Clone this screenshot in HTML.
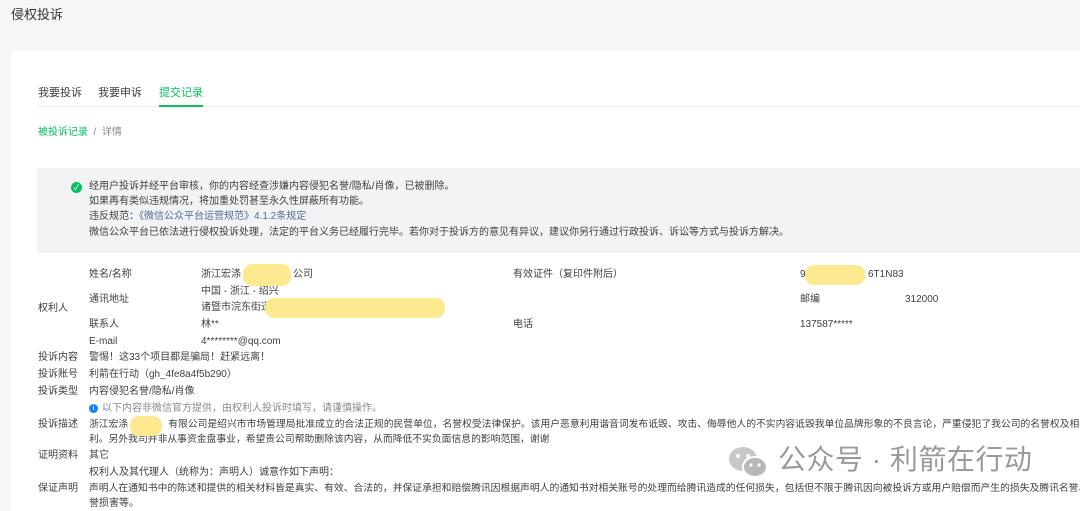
<!DOCTYPE html>
<html><head><meta charset="utf-8"><style>
body{margin:0;width:1080px;height:504px;overflow:hidden;background:#f5f6f7;font-family:"Liberation Sans","Noto Sans CJK SC",sans-serif;color:#404040;position:relative}
.a{position:absolute;white-space:nowrap;font-size:10px;line-height:12px}
.card{position:absolute;left:11px;top:51px;width:1080px;height:460px;background:#fff}
.note{position:absolute;left:37px;top:168px;width:1050px;height:85px;background:#f2f3f5}
.g{color:#8a8a8a}
.blob{position:absolute;background:#fde98f;border-radius:9px}
</style></head><body>
<div class="a" style="left:11px;top:7px;font-size:13px;line-height:16px;color:#333">侵权投诉</div>
<div class="card"></div>
<div class="a" style="left:38px;top:86px;font-size:11px;line-height:14px">我要投诉</div>
<div class="a" style="left:98px;top:86px;font-size:11px;line-height:14px">我要申诉</div>
<div class="a" style="left:159px;top:86px;font-size:11px;line-height:14px;color:#07c160">提交记录</div>
<div style="position:absolute;left:38px;top:106px;width:1042px;height:1px;background:#ececec"></div>
<div style="position:absolute;left:159px;top:105px;width:44px;height:2px;background:#07c160"></div>
<div class="a" style="left:38px;top:127px;color:#07c160">被投诉记录 <span class="g">&nbsp;/&nbsp; 详情</span></div>
<div class="note"></div>
<div style="position:absolute;left:71px;top:182px;width:11px;height:11px;border-radius:50%;background:#07c160;color:#fff;font-size:8px;line-height:11px;text-align:center">✓</div>
<div class="a" style="left:89px;top:181px">经用户投诉并经平台审核，你的内容经查涉嫌内容侵犯名誉/隐私/肖像，已被删除。</div>
<div class="a" style="left:89px;top:196px">如果再有类似违规情况，将加重处罚甚至永久性屏蔽所有功能。</div>
<div class="a" style="left:89px;top:211px">违反规范：<span style="color:#576b95">《微信公众平台运营规范》4.1.2条规定</span></div>
<div class="a" style="left:89px;top:227px">微信公众平台已依法进行侵权投诉处理，法定的平台义务已经履行完毕。若你对于投诉方的意见有异议，建议你另行通过行政投诉、诉讼等方式与投诉方解决。</div>
<div class="a" style="left:89px;top:269px">姓名/名称</div>
<div class="a" style="left:201px;top:269px">浙江宏涤</div>
<div class="a" style="left:293px;top:269px">公司</div>
<div class="a" style="left:513px;top:269px">有效证件（复印件附后）</div>
<div class="a" style="left:800px;top:269px">91</div>
<div class="a" style="left:868px;top:269px">6T1N83</div>
<div class="a" style="left:89px;top:294px">通讯地址</div>
<div class="a" style="left:201px;top:286px">中国 - 浙江 - 绍兴</div>
<div class="a" style="left:201px;top:302px">诸暨市浣东街道</div>
<div class="a" style="left:800px;top:294px">邮编</div>
<div class="a" style="left:905px;top:294px">312000</div>
<div class="a" style="left:38px;top:303px">权利人</div>
<div class="a" style="left:89px;top:319px">联系人</div>
<div class="a" style="left:201px;top:319px">林**</div>
<div class="a" style="left:513px;top:319px">电话</div>
<div class="a" style="left:800px;top:319px">137587*****</div>
<div class="a" style="left:89px;top:336px">E-mail</div>
<div class="a" style="left:201px;top:336px">4********@qq.com</div>
<div class="a" style="left:38px;top:352px">投诉内容</div><div class="a" style="left:89px;top:352px">警惕！这33个项目都是骗局！赶紧远离！</div>
<div class="a" style="left:38px;top:369px">投诉账号</div><div class="a" style="left:89px;top:369px">利箭在行动（gh_4fe8a4f5b290）</div>
<div class="a" style="left:38px;top:386px">投诉类型</div><div class="a" style="left:89px;top:386px">内容侵犯名誉/隐私/肖像</div>
<div style="position:absolute;left:89px;top:404px;width:9px;height:9px;border-radius:50%;background:#1485ee;color:#fff;font-size:7px;line-height:9px;text-align:center">i</div>
<div class="a g" style="left:102px;top:403px">以下内容非微信官方提供，由权利人投诉时填写，请谨慎操作。</div>
<div class="a" style="left:38px;top:419px">投诉描述</div>
<div class="a" style="left:89px;top:419px;font-size:9.8px">浙江宏涤<span style="display:inline-block;width:40px"></span>有限公司是绍兴市市场管理局批准成立的合法正规的民营单位，名誉权受法律保护。该用户恶意利用谐音词发布诋毁、攻击、侮辱他人的不实内容诋毁我单位品牌形象的不良言论，严重侵犯了我公司的名誉权及相关权</div>
<div class="a" style="left:89px;top:434px;font-size:9.8px">利。另外我司并非从事资金盘事业，希望贵公司帮助删除该内容，从而降低不实负面信息的影响范围，谢谢</div>
<div class="a" style="left:38px;top:450px">证明资料</div><div class="a" style="left:89px;top:450px">其它</div>
<div class="a" style="left:89px;top:467px">权利人及其代理人（统称为：声明人）诚意作如下声明：</div>
<div class="a" style="left:38px;top:483px">保证声明</div>
<div class="a" style="left:89px;top:483px;font-size:9.8px">声明人在通知书中的陈述和提供的相关材料皆是真实、有效、合法的，并保证承担和赔偿腾讯因根据声明人的通知书对相关账号的处理而给腾讯造成的任何损失，包括但不限于腾讯因向被投诉方或用户赔偿而产生的损失及腾讯名誉、商</div>
<div class="a" style="left:89px;top:498px">誉损害等。</div>
<div class="blob" style="left:243px;top:264px;width:48px;height:22px"></div>
<div class="blob" style="left:265px;top:298px;width:180px;height:20px"></div>
<div class="blob" style="left:805px;top:265px;width:60px;height:20px"></div>
<div class="blob" style="left:130px;top:416px;width:32px;height:20px"></div>
<svg style="position:absolute;left:728px;top:446px" width="42" height="34" viewBox="0 0 42 34"><ellipse cx="15" cy="13" rx="14" ry="12" fill="#c8c8c8"/><ellipse cx="27" cy="21" rx="12" ry="10" fill="#b8b8b8" stroke="#fff" stroke-width="2"/><circle cx="10" cy="10" r="2" fill="#fff"/><circle cx="20" cy="10" r="2" fill="#fff"/><circle cx="23" cy="19" r="1.6" fill="#fff"/><circle cx="31" cy="19" r="1.6" fill="#fff"/></svg>
<div class="a" style="left:778px;top:443px;font-size:28px;line-height:34px;color:#9a9a9a;letter-spacing:0.5px">公众号 · 利箭在行动</div>
</body></html>
